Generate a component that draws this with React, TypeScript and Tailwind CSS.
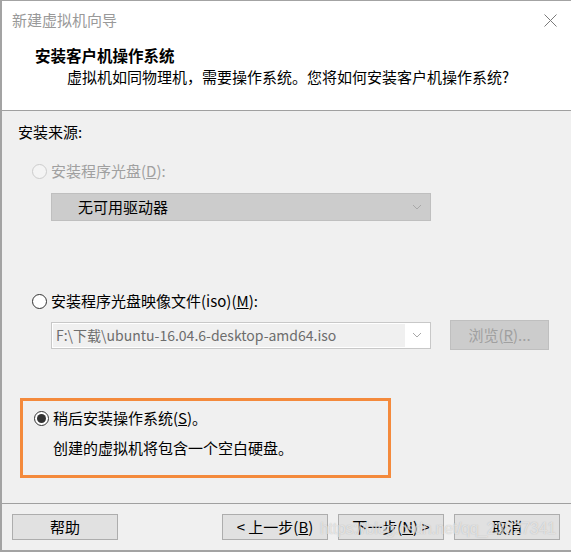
import React from 'react';

const font = { fontFamily: '"Noto Sans CJK SC", "Microsoft YaHei", sans-serif' };

function Radio({ checked, disabled }: { checked?: boolean; disabled?: boolean }) {
  return (
    <span
      className={
        'flex h-[15px] w-[15px] shrink-0 items-center justify-center rounded-full border ' +
        (disabled ? 'border-[#cccccc] bg-[#f4f4f4]' : 'border-[#333333] bg-white')
      }
    >
      {checked && <span className="h-[9px] w-[9px] rounded-full bg-[#333333]" />}
    </span>
  );
}

function Chevron() {
  return (
    <svg width="10" height="6" viewBox="0 0 10 6" className="shrink-0">
      <path d="M1 1 L5 5 L9 1" fill="none" stroke="#a8a8a8" strokeWidth="1" />
    </svg>
  );
}

function Button({ children, className = '' }: { children: React.ReactNode; className?: string }) {
  return (
    <div
      className={
        'flex h-[26px] w-[106px] items-center justify-center border border-[#adadad] bg-[#e1e1e1] text-[15px] text-black ' +
        className
      }
    >
      {children}
    </div>
  );
}

export default function App() {
  return (
    <div
      className="relative flex h-[552px] w-[571px] flex-col overflow-hidden border-t border-l-2 border-b-2 border-[#a3a3a3] bg-[#f0f0f0]"
      style={font}
    >
      {/* 头部 */}
      <div className="h-[110px] shrink-0 border-b border-[#a0a0a0] bg-white">
        <div className="flex h-[38px] items-center justify-between pl-[10px] pr-[14px]">
          <span className="text-[15px] text-[#999999]">新建虚拟机向导</span>
          <svg width="13" height="13" viewBox="0 0 13 13">
            <path d="M0.5 0.5 L12.5 12.5 M12.5 0.5 L0.5 12.5" stroke="#7a7a7a" strokeWidth="1" />
          </svg>
        </div>
        <div className="pl-[33px] pt-[5px] text-[15.5px] font-bold leading-[22px] text-black">安装客户机操作系统</div>
        <div className="pl-[65px] text-[15px] leading-[22px] text-black">
          虚拟机如同物理机，需要操作系统。您将如何安装客户机操作系统?
        </div>
      </div>

      {/* 内容 */}
      <div className="flex flex-1 flex-col pl-[16px] pt-[11px] text-[15px] leading-[20px] text-black">
        <div>安装来源:</div>

        <div className="mt-[19px] flex items-center gap-[4px] pl-[14px] text-[#a0a0a0]">
          <Radio disabled />
          <span>
            安装程序光盘(<span className="underline">D</span>):
          </span>
        </div>
        <div className="ml-[33px] mt-[12px] flex h-[28px] w-[380px] items-center justify-between border border-[#bfbfbf] bg-[#cccccc] pl-[26px] pr-[8px]">
          <span>无可用驱动器</span>
          <Chevron />
        </div>

        <div className="mt-[70px] flex items-center gap-[4px] pl-[14px]">
          <Radio />
          <span>
            安装程序光盘映像文件(iso)(<span className="underline">M</span>):
          </span>
        </div>
        <div className="mt-[9px] flex items-center">
          <div className="ml-[33px] flex h-[27px] w-[380px] items-center border border-[#c8c8c8] bg-white p-[1px]">
            <div className="flex h-full flex-1 items-center bg-[#f0f0f0] pl-[3px] text-[14px] text-[#6d6d6d]">
              F:\下载\ubuntu-16.04.6-desktop-amd64.iso
            </div>
            <div className="flex w-[24px] justify-center">
              <Chevron />
            </div>
          </div>
          <div className="ml-[19px] flex h-[30px] w-[99px] items-center justify-center border border-[#bfbfbf] bg-[#cccccc] text-[#a0a0a0]">
            浏览(<span className="underline">R</span>)...
          </div>
        </div>

        <div className="ml-[2px] mt-[48px] flex h-[80px] w-[371px] flex-col border-[3px] border-[#f48a3c] pl-[11px] pt-[7px]">
          <div className="flex items-center gap-[4px]">
            <Radio checked />
            <span>
              稍后安装操作系统(<span className="underline">S</span>)。
            </span>
          </div>
          <div className="mt-[10px] pl-[19px]">创建的虚拟机将包含一个空白硬盘。</div>
        </div>
      </div>

      {/* 底部按钮 */}
      <div className="h-[47px] shrink-0 border-t border-[#a0a0a0] pl-[10px] pt-[10px]">
        <div className="flex items-center">
          <Button>帮助</Button>
          <Button className="ml-[104px]">
            &lt; 上一步(<span className="underline">B</span>)
          </Button>
          <Button className="ml-[10px]">
            下一步(<span className="underline">N</span>) &gt;
          </Button>
          <Button className="ml-[10px]">取消</Button>
        </div>
      </div>

      {/* 水印 */}
      <div
        className="pointer-events-none absolute left-[318px] top-[516px] whitespace-nowrap text-[16px] tracking-[-0.3px] text-white/60"
        style={{ fontFamily: '"Liberation Sans", Arial, sans-serif', textShadow: '0 0 1px rgba(120,120,120,0.5)' }}
      >
        https://blog.csdn.net/qq_23827341
      </div>
    </div>
  );
}
